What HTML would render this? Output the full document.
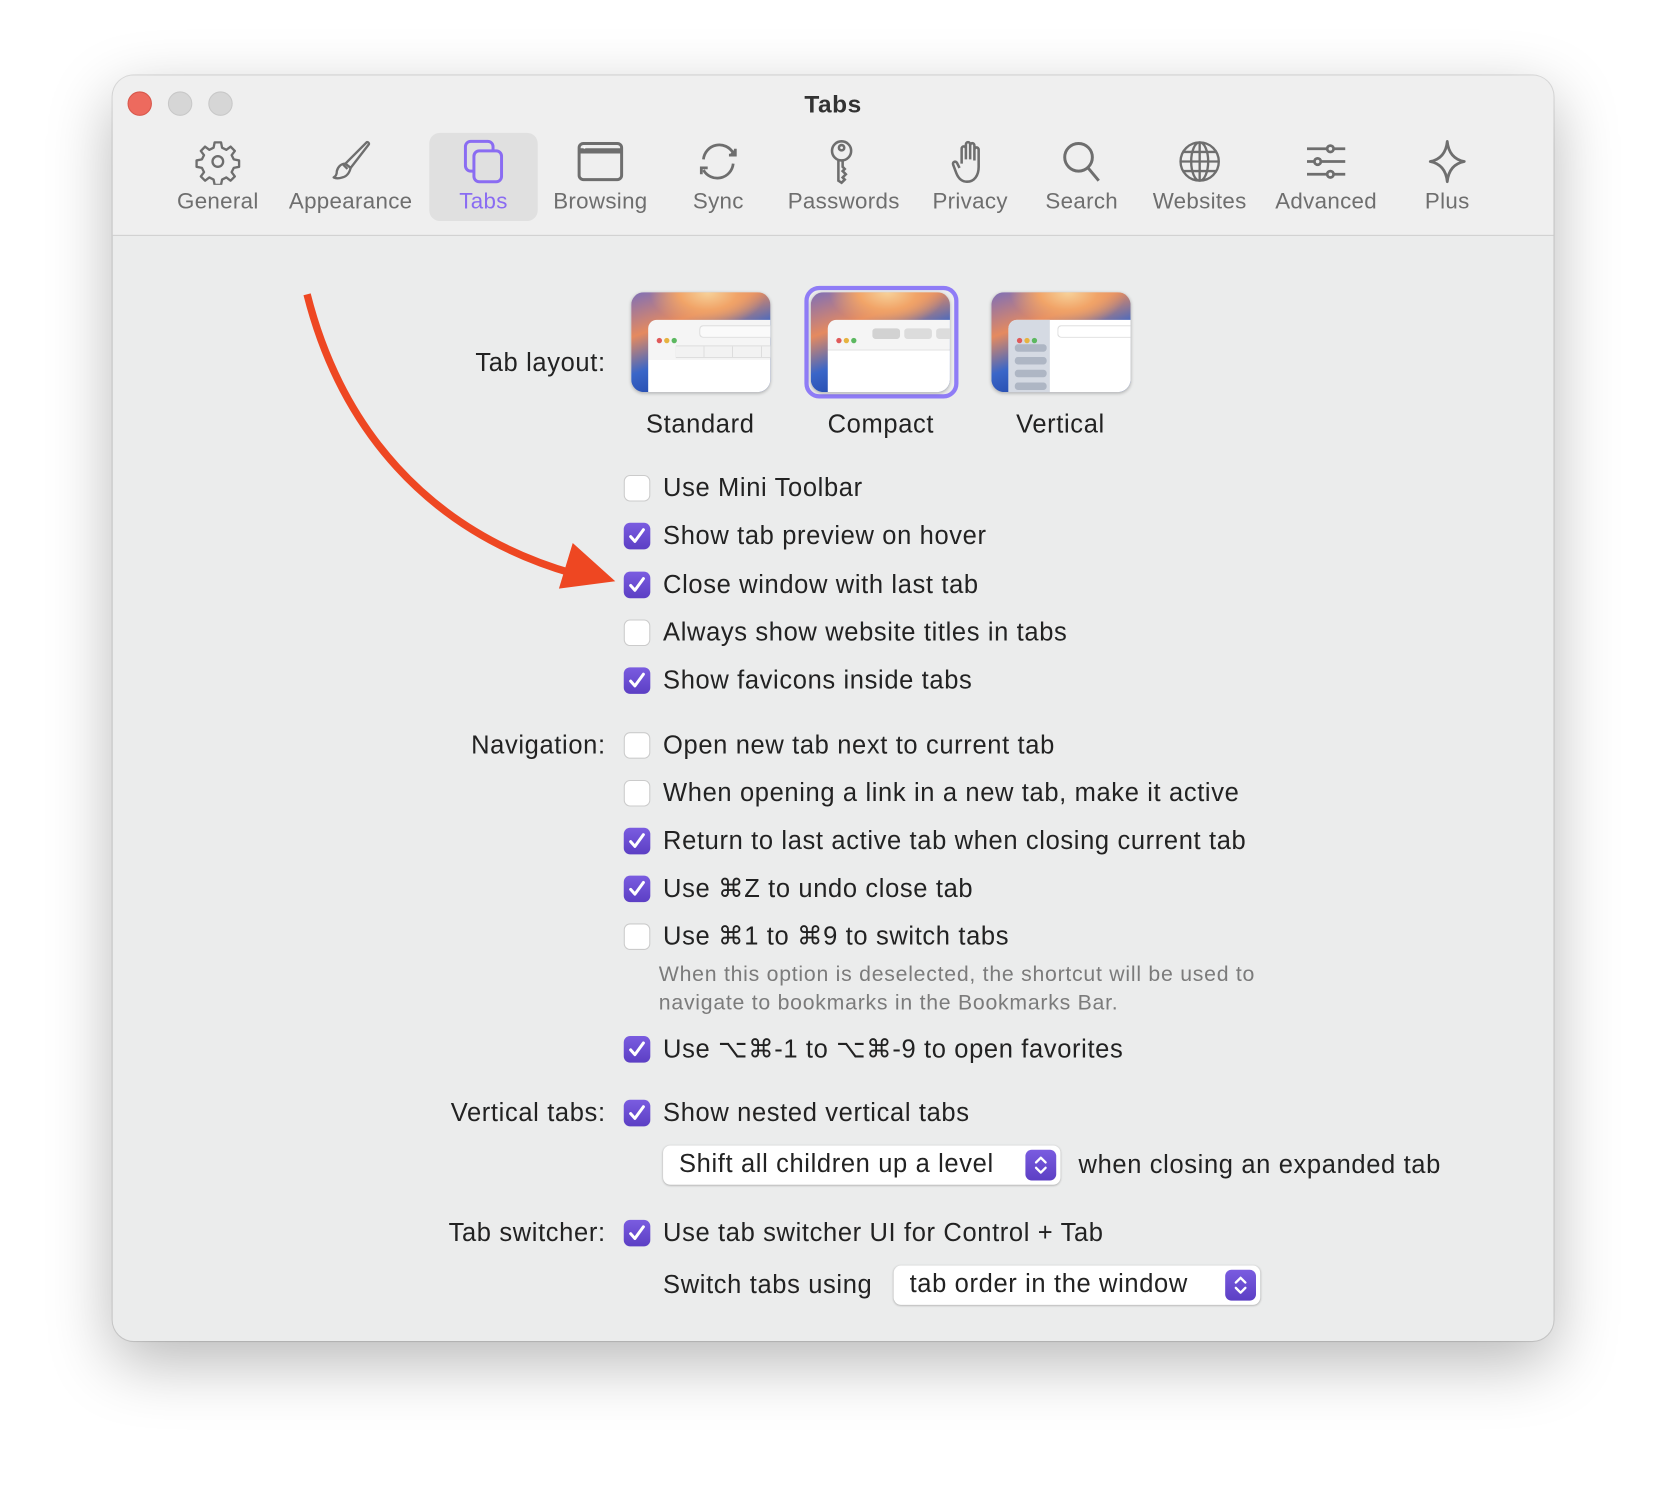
<!DOCTYPE html>
<html><head><meta charset="utf-8"><style>
*{box-sizing:border-box;margin:0;padding:0}
html,body{width:1664px;height:1488px;overflow:hidden;background:#fff}
#root{position:absolute;left:0;top:0;width:1566px;height:1400px;transform:scale(1.0626);transform-origin:0 0;font-family:"Liberation Sans","DejaVu Sans",sans-serif;color:#222}
.win{position:absolute;left:106px;top:71px;width:1356px;height:1191px;border-radius:20px;background:#ebecec;box-shadow:0 20px 60px rgba(0,0,0,.28),0 0 0 1px rgba(0,0,0,.12);overflow:hidden}
.tb{position:absolute;left:0;top:0;width:100%;height:151px;background:#efefef;border-bottom:1px solid #cfcfcf}
.tl{position:absolute;top:15px;width:23px;height:23px;border-radius:50%;background:#d6d6d6;border:1px solid #c8c8c8}
.title{position:absolute;left:0;width:100%;top:14px;text-align:center;font-weight:bold;font-size:23px;color:#333;letter-spacing:.5px}
.it{position:absolute;top:59px;width:130px;margin-left:-65px;text-align:center;color:#6e6e6e;font-size:21px;letter-spacing:.3px}
.it svg{display:block;margin:0 auto 4px;width:44px;height:44px}
.sel{position:absolute;left:298px;top:54px;width:102px;height:83px;border-radius:10px;background:#e0e0e0}
.a{position:absolute;font-size:24px;letter-spacing:.6px;line-height:28px;white-space:nowrap}
.lab{position:absolute;right:892px;font-size:24px;letter-spacing:.6px;line-height:28px;text-align:right;white-space:nowrap}
.cb{position:absolute;left:481px;width:25px;height:25px;border-radius:6px;background:#fff;border:1px solid #cbcbcb}
.cb.on{background:linear-gradient(#7a5ce0,#5c3fc4);border:none}
.cb.on svg{position:absolute;left:4px;top:4px}
.help{position:absolute;left:514px;font-size:20px;letter-spacing:.7px;line-height:27px;color:#7b7b7b}
.thumb{position:absolute;top:204px;width:131px;height:94px;border-radius:12px;overflow:hidden;background:radial-gradient(ellipse 60% 50% at 55% 0%,#f7d29a 0%,#f1a468 35%,rgba(230,130,90,0) 70%),linear-gradient(160deg,#7e6fb8 0%,#e58a5f 30%,#3a66c8 55%,#0b2a8e 100%);box-shadow:0 1px 3px rgba(0,0,0,.25)}
.inner{position:absolute;left:16px;top:26px;right:0;bottom:0;background:#fff;border-top-left-radius:8px}
.dots{position:absolute;left:8px;top:9px}
.dots i{display:inline-block;width:5px;height:5px;border-radius:50%;margin-right:2px}
.pop{position:absolute;height:37px;background:#fff;border-radius:7px;box-shadow:0 0.5px 2px rgba(0,0,0,.3);font-size:24px;letter-spacing:.6px;line-height:36px;padding-left:15px}
.step{position:absolute;right:4px;top:4px;width:29px;height:29px;border-radius:6px;background:linear-gradient(#7a5ce0,#5c3fc4)}
.tname{position:absolute;top:315px;width:160px;margin-left:-80px;text-align:center;font-size:24px;letter-spacing:.6px}
</style></head><body><div id="root">
<div class="win">
 <div class="tb">
  <div class="tl" style="left:14px;background:#ed6a5e;border-color:#d8574b"></div>
  <div class="tl" style="left:52px"></div>
  <div class="tl" style="left:90px"></div>
  <div class="title">Tabs</div>
  <div class="sel"></div>
  <div class="it" style="left:99px"><svg viewBox="0 0 44 44" fill="none" stroke="#6e6e6e" stroke-width="2.2"><path d="M19 4h6l1 5 4 2 4-3 4 4-3 4 2 4 5 1v6l-5 1-2 4 3 4-4 4-4-3-4 2-1 5h-6l-1-5-4-2-4 3-4-4 3-4-2-4-5-1v-6l5-1 2-4-3-4 4-4 4 3 4-2z" stroke-linejoin="round"/><circle cx="22" cy="22" r="5"/></svg>General</div>
  <div class="it" style="left:224px"><svg viewBox="0 0 44 44" fill="none" stroke="#6e6e6e" stroke-width="2.2" stroke-linejoin="round"><path d="M37 4c1-1 3 1 2 2L22 28l-5-4z"/><path d="M17 24l5 4c-1 4-3 8-8 9-3 1-6 1-8 0 2-1 3-3 3-6 1-4 4-7 8-7z"/><path d="M15 25l4 4"/></svg>Appearance</div>
  <div class="it" style="left:349px;color:#8a6cf2"><svg viewBox="0 0 44 44" fill="none" stroke="#8a6cf2" stroke-width="2.8"><rect x="5" y="3" width="26" height="28" rx="5"/><rect x="13" y="12" width="26" height="29" rx="5" fill="#e0e0e0"/></svg>Tabs</div>
  <div class="it" style="left:459px"><svg viewBox="0 0 44 44" fill="none" stroke="#6e6e6e" stroke-width="2.8"><rect x="2" y="5" width="40" height="34" rx="4"/><path d="M2 12h40" stroke-width="5"/><circle cx="7" cy="9" r="1" fill="#fff" stroke="none"/></svg>Browsing</div>
  <div class="it" style="left:570px"><svg viewBox="0 0 44 44" fill="none" stroke="#6e6e6e" stroke-width="2.6"><path d="M8 20a15 15 0 0 1 28-6"/><path d="M36 24a15 15 0 0 1-28 6"/><path d="M32 16l6 0 0-6" fill="#6e6e6e"/><path d="M12 28l-6 0 0 6"/></svg>Sync</div>
  <div class="it" style="left:688px"><svg viewBox="0 0 44 44" fill="none" stroke="#6e6e6e" stroke-width="2.4"><circle cx="20" cy="12" r="9"/><circle cx="20" cy="9" r="2.5"/><path d="M17 21v19l3 2 3-3-2-2 3-3-3-3 2-2-2-2v-6"/></svg>Passwords</div>
  <div class="it" style="left:807px"><svg viewBox="0 0 44 44" fill="none" stroke="#6e6e6e" stroke-width="2.4" stroke-linejoin="round"><path d="M14 24V10c0-3 4-3 4 0v10M18 20V6c0-3 4-3 4 0v14M22 20V7c0-3 4-3 4 0v13M26 21V11c0-3 4-3 4 0v16c0 8-4 14-11 14-5 0-8-3-10-8l-3-8c-1-3 3-4 4-1l2 4"/></svg>Privacy</div>
  <div class="it" style="left:912px"><svg viewBox="0 0 44 44" fill="none" stroke="#6e6e6e" stroke-width="2.8"><circle cx="19" cy="18" r="13"/><path d="M28 28l10 12"/></svg>Search</div>
  <div class="it" style="left:1023px"><svg viewBox="0 0 44 44" fill="none" stroke="#6e6e6e" stroke-width="2.2"><circle cx="22" cy="22" r="18"/><ellipse cx="22" cy="22" rx="8" ry="18"/><path d="M22 4v36M4 22h36M7 13h30M7 31h30"/></svg>Websites</div>
  <div class="it" style="left:1142px"><svg viewBox="0 0 44 44" fill="none" stroke="#6e6e6e" stroke-width="2.6"><path d="M4 10h36M4 22h36M4 34h36"/><circle cx="26" cy="10" r="3" fill="#efefef"/><circle cx="14" cy="22" r="3" fill="#efefef"/><circle cx="26" cy="34" r="3" fill="#efefef"/></svg>Advanced</div>
  <div class="it" style="left:1256px"><svg viewBox="0 0 44 44" fill="none" stroke="#6e6e6e" stroke-width="2.6" stroke-linejoin="round"><path d="M22 3c1 10 6 17 16 19-10 2-15 9-16 19-1-10-6-17-16-19 10-2 15-9 16-19z"/></svg>Plus</div>
 </div>

 <div class="lab" style="top:257px">Tab layout:</div>
 <div class="thumb" style="left:488px"><div class="inner" style="background:linear-gradient(#f5f5f5 0 38px,#fff 38px)"><div class="dots"><i style="background:#e05a5a"></i><i style="background:#e6b340"></i><i style="background:#5cb860"></i></div><div style="position:absolute;left:48px;top:5px;right:0;height:12px;border:1px solid #ddd;border-right:none;border-radius:4px 0 0 4px;background:#fafafa"></div><div style="position:absolute;left:26px;top:24px;right:0;height:12px;border-top:1px solid #ddd;border-bottom:1px solid #ddd;background:repeating-linear-gradient(90deg,#f2f2f2 0 26px,#ddd 26px 27px)"></div></div></div>
 <div style="position:absolute;left:651px;top:198px;width:145px;height:106px;border:4px solid #8f7cf6;border-radius:14px"></div>
 <div class="thumb" style="left:657px"><div class="inner" style="background:linear-gradient(#f5f5f5 0 28px,#e2e2e2 28px 29px,#fff 29px)"><div class="dots"><i style="background:#e05a5a"></i><i style="background:#e6b340"></i><i style="background:#5cb860"></i></div><div style="position:absolute;left:42px;top:8px;width:26px;height:10px;border-radius:3px;background:#d2d2d2"></div><div style="position:absolute;left:72px;top:8px;width:26px;height:10px;border-radius:3px;background:#dcdcdc"></div><div style="position:absolute;left:102px;top:8px;width:26px;height:10px;border-radius:3px;background:#dcdcdc"></div></div></div>
 <div class="thumb" style="left:827px"><div class="inner"><div style="position:absolute;left:0;top:0;width:39px;bottom:0;background:#d5dae3;border-top-left-radius:8px"></div><div class="dots"><i style="background:#e05a5a"></i><i style="background:#e6b340"></i><i style="background:#5cb860"></i></div><div style="position:absolute;left:6px;top:23px;width:30px;height:7px;border-radius:3px;background:#aeb6c4;box-shadow:0 12px 0 #aeb6c4,0 24px 0 #aeb6c4,0 36px 0 #aeb6c4"></div><div style="position:absolute;left:46px;top:5px;right:0;height:12px;border:1px solid #ddd;border-right:none;border-radius:4px 0 0 4px"></div></div></div>
 <div class="tname" style="left:553px">Standard</div>
 <div class="tname" style="left:723px">Compact</div>
 <div class="tname" style="left:892px">Vertical</div>

 <div class="cb" style="top:376px"></div><div class="a" style="left:518px;top:375px">Use Mini Toolbar</div>
 <div class="cb on" style="top:421px"><svg width="17" height="17" viewBox="0 0 17 17"><path d="M2.5 9l4 4.5 8-11" fill="none" stroke="#fff" stroke-width="2.8" stroke-linecap="round" stroke-linejoin="round"/></svg></div><div class="a" style="left:518px;top:420px">Show tab preview on hover</div>
 <div class="cb on" style="top:467px"><svg width="17" height="17" viewBox="0 0 17 17"><path d="M2.5 9l4 4.5 8-11" fill="none" stroke="#fff" stroke-width="2.8" stroke-linecap="round" stroke-linejoin="round"/></svg></div><div class="a" style="left:518px;top:466px">Close window with last tab</div>
 <div class="cb" style="top:512px"></div><div class="a" style="left:518px;top:511px">Always show website titles in tabs</div>
 <div class="cb on" style="top:557px"><svg width="17" height="17" viewBox="0 0 17 17"><path d="M2.5 9l4 4.5 8-11" fill="none" stroke="#fff" stroke-width="2.8" stroke-linecap="round" stroke-linejoin="round"/></svg></div><div class="a" style="left:518px;top:556px">Show favicons inside tabs</div>

 <div class="lab" style="top:617px">Navigation:</div>
 <div class="cb" style="top:618px"></div><div class="a" style="left:518px;top:617px">Open new tab next to current tab</div>
 <div class="cb" style="top:663px"></div><div class="a" style="left:518px;top:662px">When opening a link in a new tab, make it active</div>
 <div class="cb on" style="top:708px"><svg width="17" height="17" viewBox="0 0 17 17"><path d="M2.5 9l4 4.5 8-11" fill="none" stroke="#fff" stroke-width="2.8" stroke-linecap="round" stroke-linejoin="round"/></svg></div><div class="a" style="left:518px;top:707px">Return to last active tab when closing current tab</div>
 <div class="cb on" style="top:753px"><svg width="17" height="17" viewBox="0 0 17 17"><path d="M2.5 9l4 4.5 8-11" fill="none" stroke="#fff" stroke-width="2.8" stroke-linecap="round" stroke-linejoin="round"/></svg></div><div class="a" style="left:518px;top:752px">Use ⌘Z to undo close tab</div>
 <div class="cb" style="top:798px"></div><div class="a" style="left:518px;top:797px">Use ⌘1 to ⌘9 to switch tabs</div>
 <div class="help" style="top:833px">When this option is deselected, the shortcut will be used to<br>navigate to bookmarks in the Bookmarks Bar.</div>
 <div class="cb on" style="top:904px"><svg width="17" height="17" viewBox="0 0 17 17"><path d="M2.5 9l4 4.5 8-11" fill="none" stroke="#fff" stroke-width="2.8" stroke-linecap="round" stroke-linejoin="round"/></svg></div><div class="a" style="left:518px;top:903px">Use ⌥⌘-1 to ⌥⌘-9 to open favorites</div>

 <div class="lab" style="top:963px">Vertical tabs:</div>
 <div class="cb on" style="top:964px"><svg width="17" height="17" viewBox="0 0 17 17"><path d="M2.5 9l4 4.5 8-11" fill="none" stroke="#fff" stroke-width="2.8" stroke-linecap="round" stroke-linejoin="round"/></svg></div><div class="a" style="left:518px;top:963px">Show nested vertical tabs</div>
 <div class="pop" style="left:518px;top:1007px;width:374px">Shift all children up a level<div class="step"><svg width="29" height="29" viewBox="0 0 29 29" fill="none" stroke="#fff" stroke-width="2.2" stroke-linecap="round" stroke-linejoin="round"><path d="M10 12l4.5-4.5L19 12M10 17l4.5 4.5L19 17"/></svg></div></div>
 <div class="a" style="left:909px;top:1012px">when closing an expanded tab</div>

 <div class="lab" style="top:1076px">Tab switcher:</div>
 <div class="cb on" style="top:1077px"><svg width="17" height="17" viewBox="0 0 17 17"><path d="M2.5 9l4 4.5 8-11" fill="none" stroke="#fff" stroke-width="2.8" stroke-linecap="round" stroke-linejoin="round"/></svg></div><div class="a" style="left:518px;top:1076px">Use tab switcher UI for Control + Tab</div>
 <div class="a" style="left:518px;top:1125px">Switch tabs using</div>
 <div class="pop" style="left:735px;top:1120px;width:345px">tab order in the window<div class="step"><svg width="29" height="29" viewBox="0 0 29 29" fill="none" stroke="#fff" stroke-width="2.2" stroke-linecap="round" stroke-linejoin="round"><path d="M10 12l4.5-4.5L19 12M10 17l4.5 4.5L19 17"/></svg></div></div>
</div>
<svg style="position:absolute;left:0;top:0" width="1566" height="1400">
 <path d="M289 277 C320 400 400 500 540 540" fill="none" stroke="#ee4722" stroke-width="7"/>
 <polygon points="579,547 539,511 526,554" fill="#ee4722"/>
</svg>
</div></body></html>
